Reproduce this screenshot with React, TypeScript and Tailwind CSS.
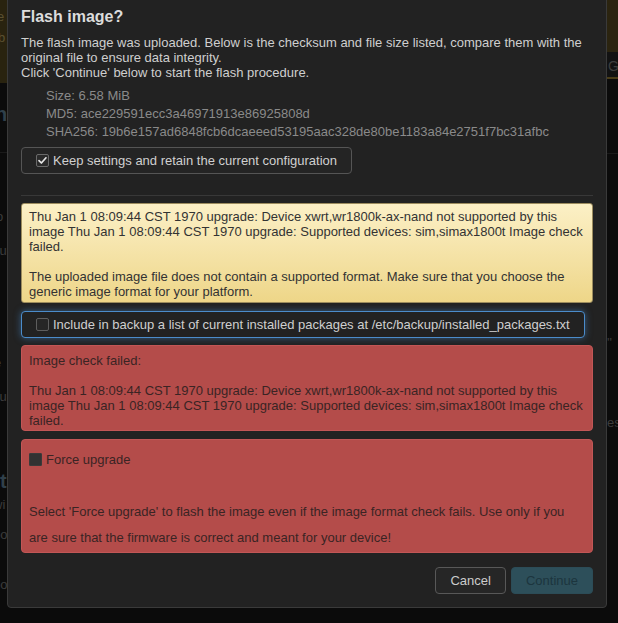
import React from "react";

const font = "font-['Liberation_Sans',Arial,sans-serif]";

function Box({ kind }: { kind: "checked" | "empty" | "dark" }) {
  if (kind === "checked") {
    return (
      <span className="flex h-[13px] w-[13px] shrink-0 items-center justify-center rounded-[2px] border border-[#6a6a6a] bg-[#2a2a2a]">
        <svg width="11" height="11" viewBox="0 0 11 11">
          <path d="M2 5.6 L4.4 8 L9 2.8" fill="none" stroke="#e6e6e6" strokeWidth="1.7" strokeLinecap="round" strokeLinejoin="round" />
        </svg>
      </span>
    );
  }
  if (kind === "dark") {
    return <span className="block h-[13px] w-[13px] shrink-0 rounded-[1px] border border-[#3a3a3a] bg-[#323232]" />;
  }
  return <span className="block h-[13px] w-[13px] shrink-0 rounded-[2px] border border-[#5e5e5e] bg-[#262626]" />;
}

export default function App() {
  return (
    <div className={`relative h-[623px] w-[618px] overflow-hidden bg-[#0b0b0b] text-[13px] ${font}`}>
      {/* dimmed page behind the dialog */}
      <div className="grid h-full grid-cols-2">
        <div className="flex flex-col">
          <div className="h-[83px] bg-[#29230f] pt-[8px] text-[13px] leading-[18px] text-[#5b5131]">
            <div className="-ml-[3px]">e</div>
            <div className="mt-[3px] -ml-[2px]">b</div>
          </div>
          <div className="h-[70px] border-b border-[#1a1a1a] pt-[16px] text-[20px] font-bold text-[#30404a]">
            <span className="-ml-[5px]">h</span>
          </div>
          <div className="flex flex-col text-[13px] leading-[18px] text-[#3c3c3c]">
            <span className="mt-[55px] -ml-[7px]">lo</span>
            <span className="mt-[16px] -ml-[7px]">ku</span>
            <span className="mt-[76px] -ml-[3px]">,</span>
            <span className="-ml-[6px]">e</span>
            <span className="mt-[16px] -ml-[7px]">ku</span>
            <span className="mt-[66px] text-[20px] font-bold text-[#30404a]">t</span>
            <span className="mt-[6px] -ml-[7px]">wi</span>
            <span className="mt-[12px] -ml-[7px]">oo</span>
            <span className="mt-[32px] -ml-[7px]">oo</span>
          </div>
        </div>
        <div className="flex flex-col">
          <div className="h-[52px] bg-[#2b2410]" />
          <div className="h-[25px] bg-[#121212] pl-[299px] pt-[4px] text-[14px] text-[#3e3e3e]">G</div>
          <div className="h-[2px] bg-[#4a3d18]" />
          <div className="h-[75px] border-b border-[#1a1a1a]" />
          <div className="flex flex-col pl-[298px] text-[13px] leading-[18px] text-[#3c3c3c]">
            <span className="mt-[180px]">''</span>
            <span className="mt-[62px]">es</span>
          </div>
        </div>
      </div>

      {/* dialog */}
      <div className="absolute left-[7px] top-[-10px] w-[600px] rounded-[4px] border border-[#3a3a3a] bg-[#222222] px-[13px] pb-[13px] pt-[16px] text-[#cfcfcf]">
        <h2 className="text-[16px] font-bold leading-[20px] text-[#dcdcdc]">Flash image?</h2>
        <p className="mt-[8px] leading-[15px]">
          The flash image was uploaded. Below is the checksum and file size listed, compare them with the original file to ensure data integrity.
          <br />
          Click 'Continue' below to start the flash procedure.
        </p>
        <ul className="mt-[7px] pl-[25px] leading-[18px] text-[#8a8a8a]">
          <li>Size: 6.58 MiB</li>
          <li>MD5: ace229591ecc3a46971913e86925808d</li>
          <li>SHA256: 19b6e157ad6848fcb6dcaeeed53195aac328de80be1183a84e2751f7bc31afbc</li>
        </ul>
        <div className="mt-[6px] flex">
          <label className="flex h-[27px] items-center gap-[4px] rounded-[4px] border border-[#555555] bg-[#242424] pl-[14px] pr-[14px] text-[#d0d0d0]">
            <Box kind="checked" />
            <span>Keep settings and retain the current configuration</span>
          </label>
        </div>
        <div className="mt-[21px] h-px bg-[#383838]" />

        <div className="mt-[7px] whitespace-pre-line rounded-[3px] border border-[#9c8c5e] bg-gradient-to-b from-[#fcf0c6] to-[#eed688] pb-[3px] pl-[7px] pr-[5px] pt-[5px] leading-[15px] text-[#333333]">
          {"Thu Jan 1 08:09:44 CST 1970 upgrade: Device xwrt,wr1800k-ax-nand not supported by this image Thu Jan 1 08:09:44 CST 1970 upgrade: Supported devices: sim,simax1800t Image check failed.\n\nThe uploaded image file does not contain a supported format. Make sure that you choose the generic image format for your platform."}
        </div>

        <label className="mt-[8px] flex h-[27px] w-[564px] items-center gap-[4px] rounded-[4px] border border-[#4b8ccb] bg-[#222222] pl-[14px] text-[#cfcfcf] shadow-[0_0_7px_rgba(70,140,210,0.55)]">
          <Box kind="empty" />
          <span>Include in backup a list of current installed packages at /etc/backup/installed_packages.txt</span>
        </label>

        <div className="mt-[7px] whitespace-pre-line rounded-[4px] border border-[#c25656] bg-[#b44c4a] pb-[2px] pl-[7px] pr-[5px] pt-[7px] leading-[15px] text-[#3a2424]">
          {"Image check failed:\n\nThu Jan 1 08:09:44 CST 1970 upgrade: Device xwrt,wr1800k-ax-nand not supported by this image Thu Jan 1 08:09:44 CST 1970 upgrade: Supported devices: sim,simax1800t Image check failed."}
        </div>

        <div className="mt-[8px] rounded-[4px] border border-[#c25656] bg-[#b44c4a] pb-[1px] pl-[7px] pr-[7px] pt-[12px] text-[#3a2424]">
          <label className="flex items-center gap-[4px] leading-[15px]">
            <Box kind="dark" />
            <span>Force upgrade</span>
          </label>
          <p className="mt-[32px] leading-[26px]">
            Select 'Force upgrade' to flash the image even if the image format check fails. Use only if you are sure that the firmware is correct and meant for your device!
          </p>
        </div>

        <div className="mt-[14px] flex justify-end gap-[5px]">
          <button className="h-[27px] rounded-[4px] border border-[#585858] bg-[#262626] px-[14px] text-[#cccccc]">Cancel</button>
          <button className="h-[27px] rounded-[4px] border border-[#2c4c57] bg-[#2d4f5a] px-[14px] text-[#1c353e]">Continue</button>
        </div>
      </div>
    </div>
  );
}
